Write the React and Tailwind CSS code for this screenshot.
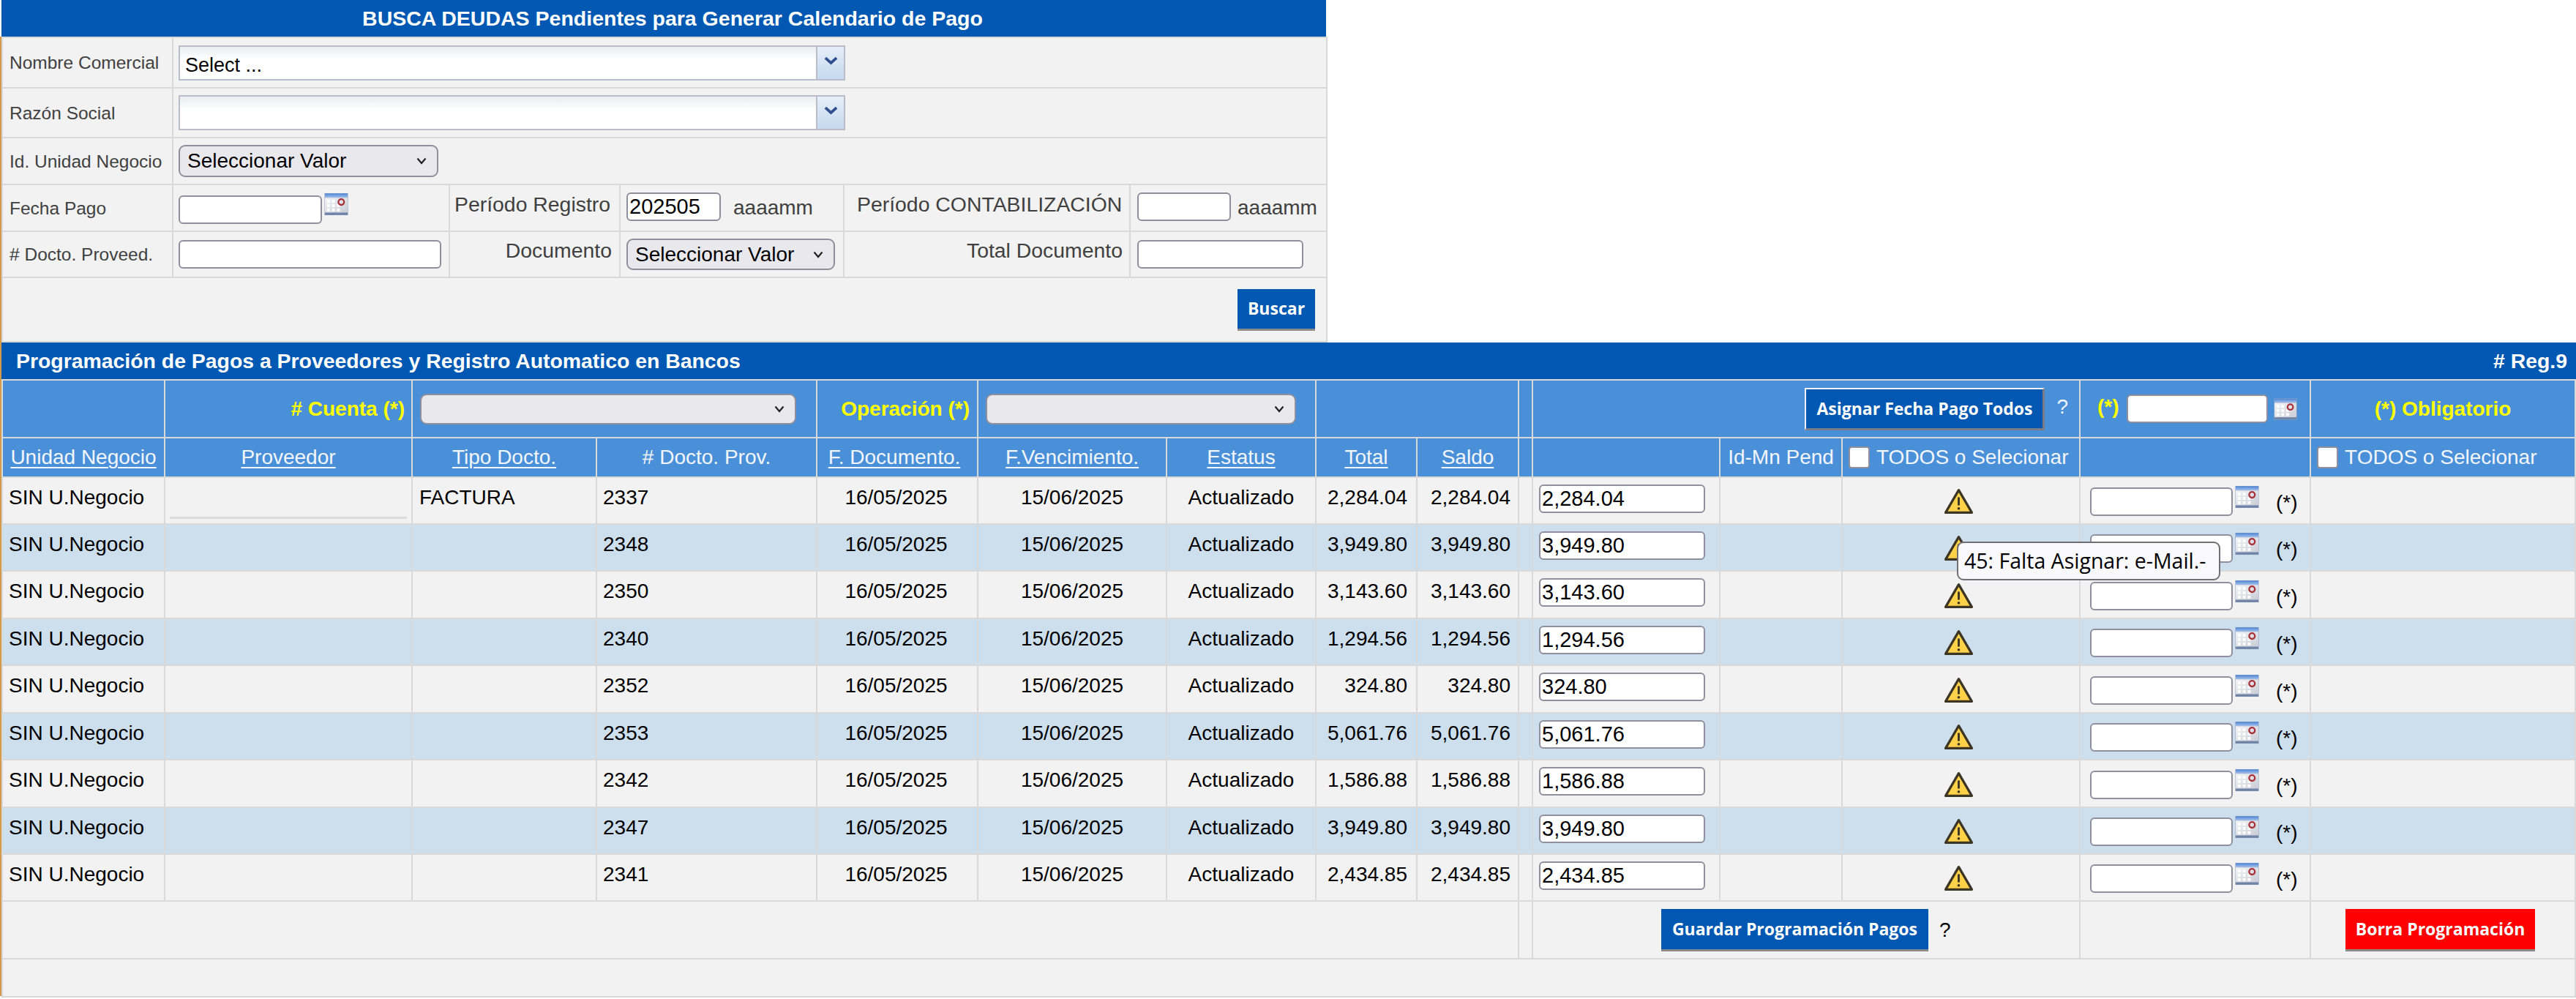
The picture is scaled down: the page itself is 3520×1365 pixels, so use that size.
import React from 'react';

const rows = [
  ['FACTURA', '2337', '2,284.04'],
  ['', '2348', '3,949.80'],
  ['', '2350', '3,143.60'],
  ['', '2340', '1,294.56'],
  ['', '2352', '324.80'],
  ['', '2353', '5,061.76'],
  ['', '2342', '1,586.88'],
  ['', '2347', '3,949.80'],
  ['', '2341', '2,434.85'],
];

const colWidths = [222, 338, 252, 301, 220, 258, 204, 138, 139, 19, 256, 167, 325, 315, 362];

const Calendar = ({ className }) => (
  <svg viewBox="0 0 34 32" className={className}>
    <defs>
      <linearGradient id="calTop" x1="0" y1="0" x2="0" y2="1">
        <stop offset="0" stopColor="#4f86d8" />
        <stop offset="1" stopColor="#a9c4ea" />
      </linearGradient>
      <linearGradient id="calBody" x1="0" y1="0" x2="1" y2="1">
        <stop offset="0" stopColor="#f4f4f6" />
        <stop offset="1" stopColor="#c9ccd6" />
      </linearGradient>
    </defs>
    <rect x="0.5" y="0.5" width="33" height="31" fill="#8d9fbd" />
    <rect x="1" y="1" width="32" height="6" fill="url(#calTop)" />
    <rect x="1" y="7" width="32" height="21" fill="url(#calBody)" />
    <rect x="1" y="28" width="32" height="3" fill="#6f83a6" />
    {[4, 11, 18].map((x) =>
      [16, 22].map((y) => <rect key={`${x}-${y}`} x={x} y={y} width="4" height="4" fill="#ffffff" />)
    )}
    <rect x="4" y="10" width="4" height="4" fill="#ffffff" />
    <rect x="11" y="10" width="4" height="4" fill="#ffffff" />
    <circle cx="24" cy="13" r="4" fill="none" stroke="#a8323a" strokeWidth="2.4" />
  </svg>
);

const Warning = ({ className }) => (
  <svg viewBox="0 0 40 35" className={className}>
    <path d="M20 2.5 L37.5 32.5 L2.5 32.5 Z" fill="#ffd24a" stroke="#3d3524" strokeWidth="3.2" strokeLinejoin="round" />
    <rect x="18.6" y="12" width="2.8" height="11" rx="1.2" fill="#3d3524" />
    <circle cx="20" cy="27" r="1.8" fill="#3d3524" />
  </svg>
);

const Field = ({ className, value = '' }) => (
  <input
    readOnly
    value={value}
    className={`block h-[39px] rounded-[6px] border-[2.5px] border-[#8f8f9d] bg-white pl-[2px] text-[29px] leading-none text-black outline-none ${className}`}
  />
);

const Select = ({ className, label = '' }) => (
  <div className={`flex items-center justify-between rounded-[9px] border-[2.5px] border-[#8f8f9d] bg-[#e9e8ed] pl-[10px] pr-[14px] text-[28px] text-black ${className}`}>
    <span>{label}</span>
    <svg viewBox="0 0 14 10" className="h-[10px] w-[14px]">
      <path d="M1.5 1.5 L7 8 L12.5 1.5" fill="none" stroke="#222222" strokeWidth="2.2" />
    </svg>
  </div>
);

const Combo = ({ label, glitch }) => (
  <div className="relative flex h-[48px] w-[911px] border-2 border-[#b8bccb] bg-white">
    <div className="flex-1 bg-gradient-to-b from-[#e8edf0] via-white via-40% to-white pl-[7px] pt-[7px] text-[27px] leading-[36px] text-black">{label}</div>
    <div className="flex w-[38px] items-center justify-center border-l-2 border-[#b8bccb] bg-gradient-to-b from-[#e6eff9] to-[#c6d9ee]">
      <svg viewBox="0 0 22 14" className="mb-[6px] h-[14px] w-[21px]">
        <path d="M3 3 L11 10 L19 3" fill="none" stroke="#2f4f8f" strokeWidth="4" />
      </svg>
    </div>
    {glitch && <div className="absolute left-0 top-full h-[2px] w-[594px] bg-[#b8bccb]" />}
  </div>
);

const BlueButton = ({ children, className }) => (
  <button className={`bg-[#0058b3] font-['Open_Sans',sans-serif] font-bold text-white ${className}`}>{children}</button>
);

const td = 'border-2 border-[#d9d9d9]';
const th = 'border-2 border-[#d9d9d9] text-center align-middle';
const label = 'border-2 border-[#d9d9d9] pl-[9px] pt-[2px] text-[24.5px]';

const SortLink = ({ children }) => <span className="font-normal underline decoration-2 underline-offset-[4px]">{children}</span>;
const Plain = ({ children }) => <span className="font-normal">{children}</span>;

export default function App() {
  return (
    <div className="relative h-[1365px] w-[3520px] overflow-hidden bg-white font-['Liberation_Sans',Arial,sans-serif]">
      {/* busqueda */}
      <div className="ml-[2px] w-[1810px]">
        <div className="flex h-[50px] items-center justify-center bg-[#0058b3] pl-[24px] text-[28.5px] font-bold text-white">
          BUSCA DEUDAS Pendientes para Generar Calendario de Pago
        </div>
        <table className="w-[1810px] table-fixed border-collapse bg-[#f2f2f2] text-[#404040]">
          <colgroup>
            <col className="w-[233px]" />
            <col className="w-[378px]" />
            <col className="w-[233px]" />
            <col className="w-[306px]" />
            <col className="w-[391px]" />
            <col className="w-[269px]" />
          </colgroup>
          <tbody>
            <tr className="h-[69px]">
              <td className={label}>Nombre Comercial</td>
              <td colSpan={5} className={`${td} pl-[7px]`}><Combo label="Select ..." /></td>
            </tr>
            <tr className="h-[68px]">
              <td className={label}>Razón Social</td>
              <td colSpan={5} className={`${td} pl-[7px]`}><Combo glitch /></td>
            </tr>
            <tr className="h-[64px]">
              <td className={label}>Id. Unidad Negocio</td>
              <td colSpan={5} className={`${td} pl-[7px]`}>
                <Select label="Seleccionar Valor" className="h-[44px] w-[355px]" />
              </td>
            </tr>
            <tr className="h-[64px]">
              <td className={label}>Fecha Pago</td>
              <td className={`${td} pl-[7px]`}>
                <div className="flex items-start">
                  <Field className="mt-[4px] w-[196px]" />
                  <Calendar className="ml-[3px] h-[32px] w-[33px]" />
                </div>
              </td>
              <td className={`${td} pb-[10px] pl-[6px] text-[28.4px]`}>Período Registro</td>
              <td className={`${td} pl-[8px]`}>
                <div className="flex items-center pb-[4px]">
                  <Field value="202505" className="w-[129px]" />
                  <span className="ml-[17px] mt-[3px] text-[28px]">aaaamm</span>
                </div>
              </td>
              <td className={`${td} pb-[10px] pl-[17px] text-[28.4px]`}>Período CONTABILIZACIÓN</td>
              <td className={`${td} pl-[9px]`}>
                <div className="flex items-center pb-[4px]">
                  <Field className="w-[128px]" />
                  <span className="ml-[9px] mt-[3px] text-[28px]">aaaamm</span>
                </div>
              </td>
            </tr>
            <tr className="h-[63px]">
              <td className={label}># Docto. Proveed.</td>
              <td className={`${td} pl-[7px]`}><Field className="w-[359px]" /></td>
              <td className={`${td} pb-[10px] pr-[10px] text-right text-[28.4px]`}>Documento</td>
              <td className={`${td} pl-[8px]`}>
                <Select label="Seleccionar Valor" className="h-[43px] w-[285px]" />
              </td>
              <td className={`${td} pb-[10px] pr-[9px] text-right text-[28.4px]`}>Total Documento</td>
              <td className={`${td} pl-[9px]`}><Field className="w-[227px]" /></td>
            </tr>
            <tr className="h-[88px]">
              <td colSpan={6} className={`${td} pr-[15px] text-right`}>
                <BlueButton className="h-[57px] w-[106px] border-b-[3px] border-[#8a8a8a] text-[23px]">Buscar</BlueButton>
              </td>
            </tr>
          </tbody>
        </table>
      </div>

      {/* programacion */}
      <div className="flex h-[50px] w-[3520px] items-center justify-between bg-[#0058b3] pl-[22px] pr-[12px] text-[28.4px] font-bold text-white">
        <span>Programación de Pagos a Proveedores y Registro Automatico en Bancos</span>
        <span># Reg.9</span>
      </div>
      <table className="ml-[2px] w-[3516px] table-fixed border-collapse text-[28px] text-black">
        <colgroup>
          {colWidths.map((w, i) => <col key={i} style={{ width: w }} />)}
        </colgroup>
        <thead className="bg-[#4a90d9] text-[#f3f6fb]">
          <tr className="h-[79px]">
            <th className={th} />
            <th className={`${th} pr-[9px] text-right font-bold text-[#ffff00]`}># Cuenta (*)</th>
            <th colSpan={2} className={`${th} pl-[10px]`}>
              <Select className="h-[42px] w-[514px]" />
            </th>
            <th className={`${th} pr-[10px] text-right font-bold text-[#ffff00]`}>Operación (*)</th>
            <th colSpan={2} className={`${th} pl-[10px]`}>
              <Select className="h-[42px] w-[424px]" />
            </th>
            <th colSpan={2} className={th} />
            <th className={th} />
            <th colSpan={3} className={th}>
              <div className="flex items-center justify-end pr-[15px]">
                <BlueButton className="h-[58px] w-[328px] border-2 border-b-[3px] border-r-[3px] border-[#f0f4fa] border-b-[#7c7c86] border-r-[#7c7c86] text-[23px]">
                  Asignar Fecha Pago Todos
                </BlueButton>
                <span className="mb-[6px] ml-[16px] font-normal">?</span>
              </div>
            </th>
            <th className={th}>
              <div className="flex items-center pl-[23px] font-bold text-[#ffff00]">
                <span className="mb-[6px]">(*)</span>
                <Field className="ml-[10px] h-[38px] w-[193px]" />
                <Calendar className="ml-[8px] h-[32px] w-[32px]" />
              </div>
            </th>
            <th className={`${th} font-bold text-[#ffff00]`}>(*) Obligatorio</th>
          </tr>
          <tr className="h-[54px]">
            <th className={th}><SortLink>Unidad Negocio</SortLink></th>
            <th className={th}><SortLink>Proveedor</SortLink></th>
            <th className={th}><SortLink>Tipo Docto.</SortLink></th>
            <th className={th}><Plain># Docto. Prov.</Plain></th>
            <th className={`${th} pr-[8px]`}><SortLink>F. Documento.</SortLink></th>
            <th className={th}><SortLink>F.Vencimiento.</SortLink></th>
            <th className={th}><SortLink>Estatus</SortLink></th>
            <th className={th}><SortLink>Total</SortLink></th>
            <th className={th}><SortLink>Saldo</SortLink></th>
            <th className={th} />
            <th className={th} />
            <th className={th}><Plain>Id-Mn Pend</Plain></th>
            <th className={th}>
              <div className="flex items-center pl-[8px]">
                <span className="block h-[30px] w-[29px] rounded-[4px] border-2 border-[#8f8f9d] bg-white" />
                <span className="ml-[9px] font-normal">TODOS o Selecionar</span>
              </div>
            </th>
            <th className={th} />
            <th className={th}>
              <div className="flex items-center pl-[8px]">
                <span className="block h-[30px] w-[29px] rounded-[4px] border-2 border-[#8f8f9d] bg-white" />
                <span className="ml-[9px] font-normal">TODOS o Selecionar</span>
              </div>
            </th>
          </tr>
        </thead>
        <tbody>
          {rows.map(([tipo, doc, amount], i) => (
            <tr key={doc} className={`${i === 2 || i === 4 || i === 6 ? 'h-[65px]' : 'h-[64px]'} ${i % 2 ? 'bg-[#cddeed]' : 'bg-[#f2f2f2]'}`}>
              <td className={`${td} pb-[9px] pl-[8px]`}>SIN U.Negocio</td>
              <td className={`${td} px-[6px]`}>
                {i === 0 && <div className="mt-[46px] h-[3px] bg-[#dcdcdc]" />}
              </td>
              <td className={`${td} pb-[9px] pl-[9px]`}>{tipo}</td>
              <td className={`${td} pb-[9px] pl-[8px]`}>{doc}</td>
              <td className={`${td} pb-[9px] pr-[3px] text-center`}>16/05/2025</td>
              <td className={`${td} pb-[9px] text-center`}>15/06/2025</td>
              <td className={`${td} pb-[9px] text-center`}>Actualizado</td>
              <td className={`${td} pb-[9px] pr-[12px] text-right`}>{amount}</td>
              <td className={`${td} pb-[9px] pr-[10px] text-right`}>{amount}</td>
              <td className={td} />
              <td className={`${td} pl-[8px]`}>
                <Field value={amount} className="mb-[6px] w-[227px]" />
              </td>
              <td className={td} />
              <td className={`${td} pr-[7px] text-center`}>
                <Warning className="mx-auto mt-[2px] h-[36px] w-[41px]" />
              </td>
              <td className={`${td} pl-[13px]`}>
                <div className="flex items-start">
                  <Field className="mt-[6px] w-[195px]" />
                  <Calendar className="ml-[3px] mt-[3px] h-[32px] w-[33px]" />
                  <span className="ml-[23px] mt-[6px]">(*)</span>
                </div>
              </td>
              <td className={td} />
            </tr>
          ))}
          <tr className="h-[79px] bg-[#f2f2f2]">
            <td colSpan={9} className={td} />
            <td className={td} />
            <td colSpan={3} className={td}>
              <div className="flex items-center pl-[175px]">
                <BlueButton className="h-[58px] w-[365px] border-b-[3px] border-[#8a8a8a] text-[23px]">
                  Guardar Programación Pagos
                </BlueButton>
                <span className="ml-[15px]">?</span>
              </div>
            </td>
            <td className={td} />
            <td className={`${td} pl-[47px]`}>
              <button className="h-[58px] w-[259px] border-b-[3px] border-[#8a8a8a] bg-[#ff0000] font-['Open_Sans',sans-serif] text-[23px] font-bold text-white">
                Borra Programación
              </button>
            </td>
          </tr>
          <tr className="h-[52px] bg-[#f2f2f2]">
            <td colSpan={15} className={td} />
          </tr>
        </tbody>
      </table>

      {/* tooltip del aviso */}
      <div className="absolute left-[2674px] top-[740px] flex h-[53px] w-[360px] items-center rounded-[9px] border-2 border-[#6f6f75] bg-[#f9f9fb] pl-[8px] font-['Open_Sans',sans-serif] text-[28.5px] text-black">
        45: Falta Asignar: e-Mail.-
      </div>
      <div className="absolute left-0 top-[50px] h-[1311px] w-[2px] bg-[#d29a4a]" />
    </div>
  );
}
